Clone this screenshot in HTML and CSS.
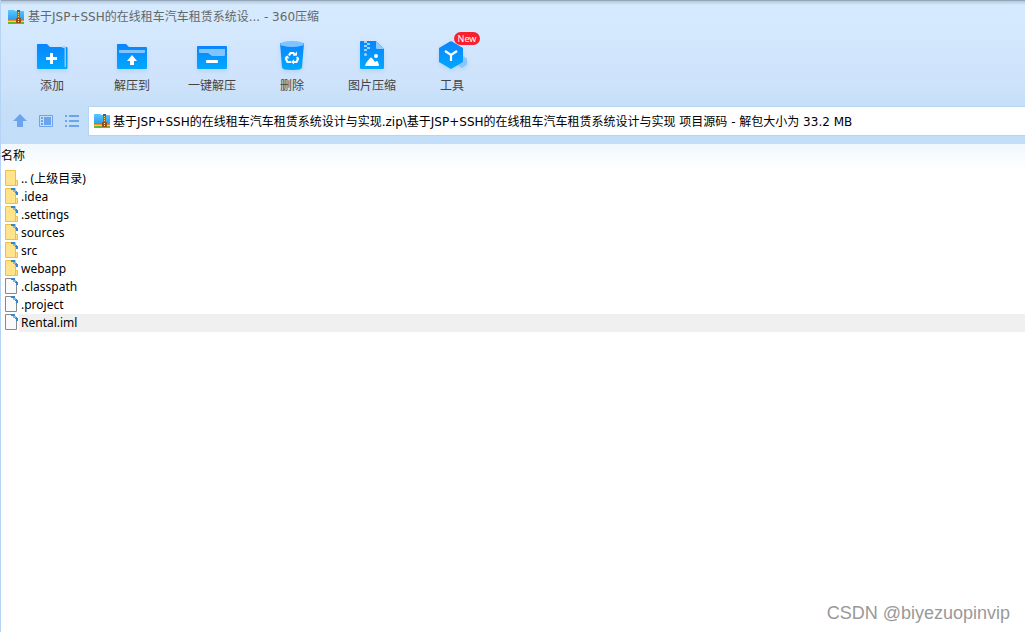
FILE: index.html
```html
<!DOCTYPE html>
<html lang="zh-CN">
<head>
<meta charset="utf-8">
<meta name="viewport" content="width=device-width, initial-scale=1">
<title>360压缩</title>
<link rel="stylesheet" href="styles.css">
</head>
<body>
<svg class="defs" aria-hidden="true">
  <defs>
    <linearGradient id="blue" x1="0" y1="0" x2="0" y2="1"><stop offset="0" stop-color="#0a84ff"/><stop offset="1" stop-color="#00a8ff"/></linearGradient>
    <linearGradient id="sky" x1="0" y1="0" x2="0" y2="1"><stop offset="0" stop-color="#5cc8fb"/><stop offset="1" stop-color="#2a9df0"/></linearGradient>
    <symbol id="archive" viewBox="0 0 16 16">
      <path d="M0 1.500Q0 1 .5 1H6l1.500 1H15.500q.5 0 .5.500V11H0z" fill="url(#sky)"/>
      <path d="M0 11H16v1H0z" fill="#f98b1d"/>
      <path d="M0 12H16v1H0z" fill="#ffd44a"/>
      <path d="M0 13H16v1.500q0 .5-.5.500H.5Q0 15 0 14.500z" fill="#62b832"/>
      <path d="M9 2h3v8H9z" fill="#a8651e"/>
      <path d="M9 1h3v2H9z" fill="#286996"/>
      <path d="M10 3h1v1h-1zM10 5h1v1h-1zM10 7h1v1h-1z" fill="#ffca58"/>
      <rect x="8" y="9" width="5" height="5" rx="1" fill="#9b4d12"/>
      <path d="M10 10h1v1h-1zM10 12h1v1h-1z" fill="#fff1b8"/>
    </symbol>
    <symbol id="folder" viewBox="0 0 15 18">
      <path d="M1.500 .5H11.500V10.500H13.500V15.500H1.500z" fill="#ffe48b" stroke="#e9c04a"/>
      <path d="M11.500 10.500V15.500" stroke="#e9c04a" fill="none"/>
    </symbol>
    <symbol id="sheet" viewBox="0 0 15 18">
      <path d="M1.500 .5H9.500L12.500 4.500V15.500H1.500z" fill="#fafafa" stroke="#888"/>
    </symbol>
    <symbol id="mark" viewBox="0 0 15 18">
      <path d="M7 0h4v3H9V2H7zM11 3h2v1h1v3h-2V5h-1z" fill="#2e87d3"/>
      <path d="M9 2h3v2H9z" fill="#7ab7e7"/>
    </symbol>
  </defs>
</svg>

<div class="window">
  <header class="chrome">
    <div class="titlebar">
      <svg class="app-icon" aria-hidden="true"><use href="#archive"/></svg>
      <h1 class="title">基于JSP+SSH的在线租车汽车租赁系统设... - 360压缩</h1>
    </div>

    <nav class="toolbar" aria-label="工具栏">
      <button class="tool" type="button">
        <svg class="tool-icon" viewBox="0 0 32 32" aria-hidden="true">
          <path d="M1 4.500Q1 4 1.500 4H11l3 3H30.500q1 0 1 1V28q0 1-1 1H2q-1 0-1-1z" fill="url(#blue)"/>
          <path d="M26 6.500h3q1 0 1 1V27h-1.500V8H26z" fill="#8bcbff"/>
          <path d="M14 13h3v4h4v3h-4v4h-3v-4h-4v-3h4z" fill="#fff"/>
        </svg>
        <span>添加</span>
      </button>
      <button class="tool" type="button">
        <svg class="tool-icon" viewBox="0 0 32 32" aria-hidden="true">
          <path d="M1 4.500Q1 4 1.500 4H10l3 3H30q1 0 1 1V28q0 1-1 1H2q-1 0-1-1z" fill="url(#blue)"/>
          <path d="M3 10h26v2q0 1-1 1H4q-1 0-1-1z" fill="#82c4ff"/>
          <path d="M16 15l5 6h-3v4h-4v-4h-3z" fill="#fff"/>
        </svg>
        <span>解压到</span>
      </button>
      <button class="tool" type="button">
        <svg class="tool-icon" viewBox="0 0 32 32" aria-hidden="true">
          <rect x="1" y="6" width="30" height="23" rx="1" fill="url(#blue)"/>
          <path d="M3 9h26v6q0 1-1 1H16l-4-3H4q-1 0-1-1z" fill="#82c4ff"/>
          <rect x="10" y="20" width="12" height="3" rx="1" fill="#fff"/>
        </svg>
        <span>一键解压</span>
      </button>
      <button class="tool" type="button">
        <svg class="tool-icon" viewBox="0 0 32 32" aria-hidden="true">
          <path d="M4 3H28L26 27.500Q26 30 16 30T6 27.500z" fill="url(#blue)"/>
          <ellipse cx="16" cy="4" rx="12" ry="3" fill="#7fc3ff"/>
          <g fill="none" stroke="#fff" stroke-width="2.200">
            <path d="M13 15.500l1.500-2.500h3l1.500 2.500"/>
            <path d="M21 17l1 2-1.500 3H17.500"/>
            <path d="M15 22h-3.500L10 19l1-2"/>
          </g>
          <path d="M17 15.500h4v-4zM18 19.500v5l-3-2.500zM8.500 17.500l3-2 2 3z" fill="#fff"/>
        </svg>
        <span>删除</span>
      </button>
      <button class="tool" type="button">
        <svg class="tool-icon" viewBox="0 0 32 32" aria-hidden="true">
          <path d="M5 1H20l8 8V28q0 1-1 1H5q-1 0-1-1V2q0-1 1-1z" fill="url(#blue)"/>
          <path d="M20 1l8 8h-7q-1 0-1-1z" fill="#8bcbff"/>
          <path d="M8 1h3v2H8zM11 3h3v2h-3zM8 5h3v2H8zM11 7h3v2h-3zM8 9h3v2H8z" fill="#9ed3ff"/>
          <circle cx="9.500" cy="14.500" r="1.500" fill="#9ed3ff"/>
          <circle cx="20" cy="16" r="2" fill="#fff"/>
          <path d="M9 26l1-3 4-5q1-.8 2 0l3 4 1.500-1q1 0 1.500 1l1 3q0 1-1 1H10q-1 0-1-1z" fill="#fff"/>
        </svg>
        <span>图片压缩</span>
      </button>
      <button class="tool" type="button">
        <svg class="tool-icon" viewBox="0 0 32 32" aria-hidden="true">
          <path d="M25 15l6 3.500v6L26 28l-5-3z" fill="#8ac6fd"/>
          <path d="M14 1.500q1-.7 2 0L27 8V22L16 28.500q-1 .7-2 0L3 22V8z" fill="url(#blue)"/>
          <path d="M9 11l6 4 6-4M15 15v6" fill="none" stroke="#fff" stroke-width="2.200"/>
        </svg>
        <span>工具</span>
        <span class="badge">New</span>
      </button>
    </nav>

    <div class="pathbar">
      <div class="nav-buttons">
        <button class="nav" type="button" aria-label="向上">
          <svg viewBox="0 0 16 16" aria-hidden="true"><path d="M8 1l7 7h-4v6H5V8H1z" fill="#6ba3ee"/></svg>
        </button>
        <button class="nav" type="button" aria-label="预览">
          <svg viewBox="0 0 16 16" aria-hidden="true"><path d="M1.500 2.500h13v11h-13z" fill="none" stroke="#6ba3ee"/><path d="M3 4h2v2H3zM3 7h2v2H3zM3 10h2v2H3zM6 4h7v8H6z" fill="#6ba3ee"/></svg>
        </button>
        <button class="nav" type="button" aria-label="列表">
          <svg viewBox="0 0 16 16" aria-hidden="true"><path d="M1 2h2v2H1zM5 2h10v2H5zM1 7h2v2H1zM5 7h10v2H5zM1 12h2v2H1zM5 12h10v2H5z" fill="#6ba3ee"/></svg>
        </button>
      </div>
      <label class="address">
        <svg class="app-icon" aria-hidden="true"><use href="#archive"/></svg>
        <input class="path" type="text" aria-label="路径" value="基于JSP+SSH的在线租车汽车租赁系统设计与实现.zip\基于JSP+SSH的在线租车汽车租赁系统设计与实现 项目源码 - 解包大小为 33.2 MB">
      </label>
    </div>
  </header>

  <main class="content">
    <table class="files">
      <thead><tr><th colspan="2" scope="col">名称</th></tr></thead>
      <tbody>
        <tr><td class="icon"><svg><use href="#folder"/></svg></td><td class="name">.. (上级目录)</td></tr>
        <tr><td class="icon"><svg><use href="#folder"/><use href="#mark"/></svg></td><td class="name">.idea</td></tr>
        <tr><td class="icon"><svg><use href="#folder"/><use href="#mark"/></svg></td><td class="name">.settings</td></tr>
        <tr><td class="icon"><svg><use href="#folder"/><use href="#mark"/></svg></td><td class="name">sources</td></tr>
        <tr><td class="icon"><svg><use href="#folder"/><use href="#mark"/></svg></td><td class="name">src</td></tr>
        <tr><td class="icon"><svg><use href="#folder"/><use href="#mark"/></svg></td><td class="name">webapp</td></tr>
        <tr><td class="icon"><svg><use href="#sheet"/><use href="#mark"/></svg></td><td class="name">.classpath</td></tr>
        <tr><td class="icon"><svg><use href="#sheet"/><use href="#mark"/></svg></td><td class="name">.project</td></tr>
        <tr class="selected"><td class="icon"><svg><use href="#sheet"/><use href="#mark"/></svg></td><td class="name">Rental.iml</td></tr>
      </tbody>
    </table>
  </main>
  <p class="watermark">CSDN @biyezuopinvip</p>
</div>
</body>
</html>
```
FILE: styles.css
```css
* { box-sizing: border-box; }

body {
  margin: 0;
  background: #fff;
  color: #000;
  font: 12px/18px "Noto Sans", "Noto Sans CJK SC", sans-serif;
}

button, input { font: inherit; color: inherit; border: 0; padding: 0; background: none; }
svg { display: block; }
.defs { position: absolute; width: 0; height: 0; }

.window {
  position: relative;
  min-height: 100vh;
  border-left: 1px solid #b5d3f5;
}

.chrome {
  padding-bottom: 8px;
  border-top: 1px solid #94a7ba;
  background: linear-gradient(#b5c8da 0, #d6eafe 4px, #d5eafe 20px, #cde2fb 84px, #c5dff8 106px, #c2ddf8 100%);
}

.titlebar { display: flex; align-items: center; gap: 4px; height: 31px; padding-left: 7px; }
.app-icon { flex: none; width: 16px; height: 16px; }
.title, .path { font-family: "DejaVu Sans", "Noto Sans CJK SC", sans-serif; }
.title { margin: 0; color: #666; font-size: 12px; font-weight: 400; white-space: nowrap; }

.toolbar { display: flex; height: 74px; padding-top: 8px; padding-left: 11px; }
.tool {
  position: relative;
  display: flex;
  flex-direction: column;
  align-items: center;
  gap: 5px;
  width: 80px;
  height: 55px;
  color: #444;
  white-space: nowrap;
}
.tool-icon { width: 32px; height: 32px; filter: drop-shadow(0 2px 2px #8fbdf266); }
.badge {
  position: absolute;
  top: -8px;
  left: 42px;
  width: 26px;
  height: 13px;
  border-radius: 7px;
  background: #f91f2c;
  color: #fff;
  font-size: 9px;
  line-height: 13px;
  text-align: center;
}

.pathbar { display: flex; align-items: center; }
.nav-buttons { display: flex; gap: 10px; width: 87px; padding-left: 11px; }
.nav svg { width: 16px; height: 16px; }
.address {
  display: flex;
  flex: 1;
  align-items: center;
  gap: 3px;
  min-width: 0;
  height: 30px;
  padding-left: 5px;
  border: 1px solid #b7d4f2;
  border-right: 0;
  background: #fff;
}
.path { flex: 1; min-width: 0; height: 26px; padding-bottom: 2px; outline: 0; }

.files { width: 100%; border-collapse: collapse; }
.files th {
  height: 26px;
  padding: 0 0 2px;
  background: linear-gradient(#f1f7fe, #fff);
  font-weight: 400;
  text-align: left;
}
.files td { height: 18px; padding: 0; line-height: 18px; }
.files .icon { width: 18px; padding-left: 3px; }
.icon svg { width: 15px; height: 18px; }
.files .name { padding-left: 2px; }
.selected .name { background: #f0f0f0; }

.watermark {
  position: absolute;
  right: 15px;
  bottom: 8px;
  margin: 0;
  color: #999;
  font: 18px/22px "Liberation Sans", Arial, sans-serif;
}
```
